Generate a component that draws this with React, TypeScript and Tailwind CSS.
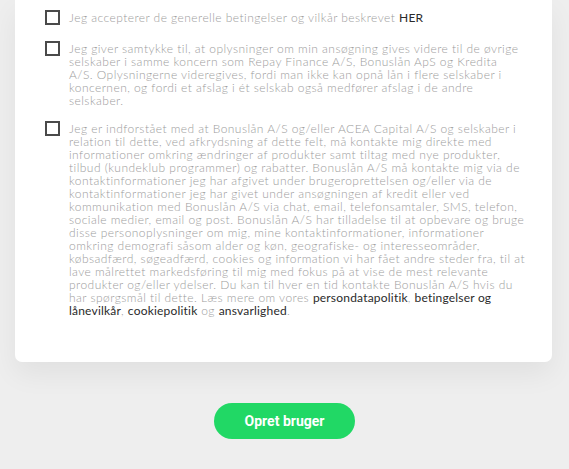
import React from "react";

const Dark = ({ children }: { children: React.ReactNode }) => (
  <span className="font-normal tracking-[0.2px] text-[#2a2a2a]">{children}</span>
);

const Box = () => (
  <div className="mt-[-1px] h-[15px] w-[15px] shrink-0 border-2 border-[#4a4a4a] bg-white" />
);

const Row = ({ children, className = "" }: { children: React.ReactNode; className?: string }) => (
  <div className={"flex items-start gap-[9px] " + className}>
    <Box />
    <p className="whitespace-nowrap text-[12px] font-light leading-[13px] tracking-[0.45px] text-[#9c9c9c]">{children}</p>
  </div>
);

export default function App() {
  return (
    <div
      className="min-h-[469px] w-[569px] overflow-hidden bg-[#eeeeee]"
      style={{ fontFamily: "Lato, 'Open Sans', sans-serif" }}
    >
      <div className="ml-[15px] w-[537px] rounded-b-[7px] bg-white pl-[30px] pr-[30px] pt-[11px] pb-[45px] shadow-[0_12px_28px_rgba(0,0,0,0.06)]">
        <div className="flex flex-col gap-[17px]">
          <Row>
            Jeg accepterer de generelle betingelser og vilkår beskrevet <Dark>HER</Dark>
          </Row>
          <Row>
            Jeg giver samtykke til, at oplysninger om min ansøgning gives videre til de øvrige
            <br />
            selskaber i samme koncern som Repay Finance A/S, Bonuslån ApS og Kredita
            <br />
            A/S. Oplysningerne videregives, fordi man ikke kan opnå lån i flere selskaber i
            <br />
            koncernen, og fordi et afslag i ét selskab også medfører afslag i de andre
            <br />
            selskaber.
          </Row>
          <Row className="mt-[-2px]">
            Jeg er indforstået med at Bonuslån A/S og/eller ACEA Capital A/S og selskaber i
            <br />
            relation til dette, ved afkrydsning af dette felt, må kontakte mig direkte med
            <br />
            informationer omkring ændringer af produkter samt tiltag med nye produkter,
            <br />
            tilbud (kundeklub programmer) og rabatter. Bonuslån A/S må kontakte mig via de
            <br />
            kontaktinformationer jeg har afgivet under brugeroprettelsen og/eller via de
            <br />
            kontaktinformationer jeg har givet under ansøgningen af kredit eller ved
            <br />
            kommunikation med Bonuslån A/S via chat, email, telefonsamtaler, SMS, telefon,
            <br />
            sociale medier, email og post. Bonuslån A/S har tilladelse til at opbevare og bruge
            <br />
            disse personoplysninger om mig, mine kontaktinformationer, informationer
            <br />
            omkring demografi såsom alder og køn, geografiske- og interesseområder,
            <br />
            købsadfærd, søgeadfærd, cookies og information vi har fået andre steder fra, til at
            <br />
            lave målrettet markedsføring til mig med fokus på at vise de mest relevante
            <br />
            produkter og/eller ydelser. Du kan til hver en tid kontakte Bonuslån A/S hvis du
            <br />
            har spørgsmål til dette. Læs mere om vores <Dark>persondatapolitik</Dark>, <Dark>betingelser og</Dark>
            <br />
            <Dark>lånevilkår</Dark>, <Dark>cookiepolitik</Dark> og <Dark>ansvarlighed</Dark>.
          </Row>
        </div>
      </div>
      <div className="flex justify-center pt-[41px]">
        <button
          className="h-[36px] w-[141px] rounded-full bg-[#21d865] text-[14px] font-bold text-white"
          style={{ fontFamily: "Roboto, sans-serif" }}
        >
          Opret bruger
        </button>
      </div>
    </div>
  );
}
